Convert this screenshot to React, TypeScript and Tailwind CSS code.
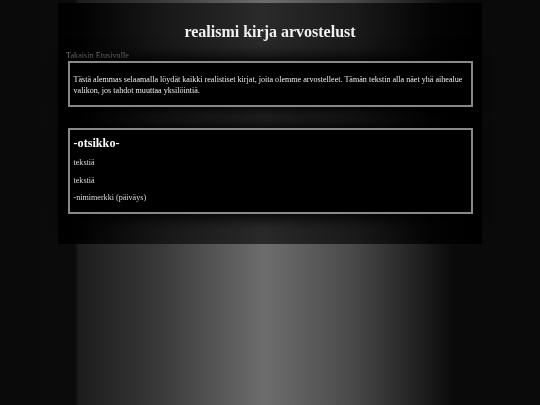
export default function App() {
  return (
    <div className="min-h-[405px] w-full bg-[#0a0a0a] bg-[linear-gradient(to_right,#0a0a0a_0%,#0b0b0b_13.8%,#1c1c1c_14.6%,#3a3a3a_30%,#6d6d6d_49%,#4a4a4a_65%,#1e1e1e_78%,#0a0a0a_84%,#0a0a0a_100%)] pt-[3px] font-['Liberation_Serif',serif] antialiased">
      <div className="mx-auto flex w-[424px] flex-col bg-[linear-gradient(to_right,#000_0%,#030303_6%,#181818_25%,#2a2a2a_48%,#1a1a1a_70%,#040404_88%,#000_100%)] pb-[30px] opacity-[0.995] will-change-transform">
        <h1 className="mt-[19px] text-center text-[16px] font-bold leading-[20px] text-[#f2f2f2]">
          realismi kirja arvostelust
        </h1>
        <a className="ml-[8px] mt-[9px] text-[8.2px] leading-[10px] text-[#a0a0a0]">
          Takaisin Etusivulle
        </a>

        <div className="mx-auto w-[405px] border-2 border-[#8a8a8a] bg-black px-[4px] pb-[9.5px] pt-[10.5px] text-[8.1px] leading-[11px] text-[#ececec] shadow-[0_0_14px_4px_#000]">
          <p>
            Tästä alemmas selaamalla löydät kaikki realistiset kirjat, joita olemme arvostelleet. Tämän tekstin alla näet yhä aihealue valikon, jos tahdot muuttaa yksilöintiä.
          </p>
        </div>

        <div className="mx-auto mt-[21px] flex w-[405px] flex-col border-2 border-[#8a8a8a] bg-black px-[4px] pb-[9.5px] pt-[6px] shadow-[0_0_14px_4px_#000]">
          <h2 className="text-[12.2px] font-bold leading-[14px] text-white">-otsikko-</h2>
          <p className="mt-[6.5px] text-[8.1px] leading-[11px] text-[#dcdcdc]">tekstiä</p>
          <p className="mt-[7px] text-[8.1px] leading-[11px] text-[#dcdcdc]">tekstiä</p>
          <p className="mt-[6px] text-[8.1px] leading-[11px] text-[#dcdcdc]">-nimimerkki (päiväys)</p>
        </div>
      </div>
    </div>
  );
}
